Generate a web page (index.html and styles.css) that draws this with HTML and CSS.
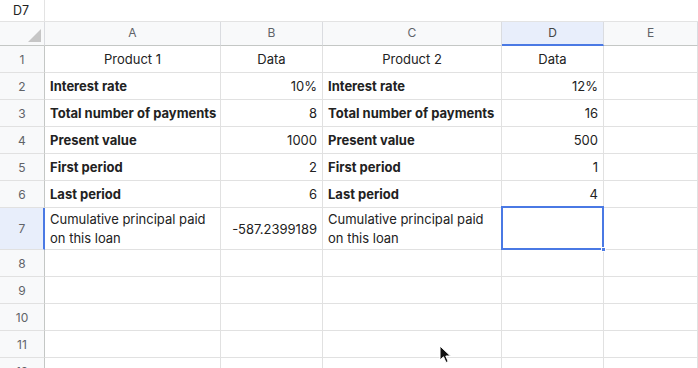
FILE: index.html
```html
<!DOCTYPE html>
<html lang="en">
<head>
    <meta charset="UTF-8">
    <title>Sheet</title>
    <link rel="stylesheet" href="styles.css">
</head>
<body>
    <div class="namebar">
        <div class="namebox">D7</div>
        <div class="formula"></div>
    </div>
    <div class="sheet">
        <div class="corner"><span class="tri"></span></div>
        <div class="colhead">A</div>
        <div class="colhead">B</div>
        <div class="colhead">C</div>
        <div class="colhead active">D</div>
        <div class="colhead">E</div>

        <div class="rowhead">1</div>
        <div class="cell center">Product 1</div>
        <div class="cell center">Data</div>
        <div class="cell center">Product 2</div>
        <div class="cell center">Data</div>
        <div class="cell"></div>

        <div class="rowhead">2</div>
        <div class="cell bold">Interest rate</div>
        <div class="cell num">10%</div>
        <div class="cell bold">Interest rate</div>
        <div class="cell num">12%</div>
        <div class="cell"></div>

        <div class="rowhead">3</div>
        <div class="cell bold">Total number of payments</div>
        <div class="cell num">8</div>
        <div class="cell bold">Total number of payments</div>
        <div class="cell num">16</div>
        <div class="cell"></div>

        <div class="rowhead">4</div>
        <div class="cell bold">Present value</div>
        <div class="cell num">1000</div>
        <div class="cell bold">Present value</div>
        <div class="cell num">500</div>
        <div class="cell"></div>

        <div class="rowhead">5</div>
        <div class="cell bold">First period</div>
        <div class="cell num">2</div>
        <div class="cell bold">First period</div>
        <div class="cell num">1</div>
        <div class="cell"></div>

        <div class="rowhead">6</div>
        <div class="cell bold">Last period</div>
        <div class="cell num">6</div>
        <div class="cell bold">Last period</div>
        <div class="cell num">4</div>
        <div class="cell"></div>

        <div class="rowhead active">7</div>
        <div class="cell wrap">Cumulative principal paid on this loan</div>
        <div class="cell num">-587.2399189</div>
        <div class="cell wrap">Cumulative principal paid on this loan</div>
        <div class="cell selected"><span class="handle"></span></div>
        <div class="cell"></div>

        <div class="rowhead">8</div>
        <div class="cell"></div><div class="cell"></div><div class="cell"></div><div class="cell"></div><div class="cell"></div>
        <div class="rowhead">9</div>
        <div class="cell"></div><div class="cell"></div><div class="cell"></div><div class="cell"></div><div class="cell"></div>
        <div class="rowhead">10</div>
        <div class="cell"></div><div class="cell"></div><div class="cell"></div><div class="cell"></div><div class="cell"></div>
        <div class="rowhead">11</div>
        <div class="cell"></div><div class="cell"></div><div class="cell"></div><div class="cell"></div><div class="cell"></div>
        <div class="rowhead">12</div>
        <div class="cell"></div><div class="cell"></div><div class="cell"></div><div class="cell"></div><div class="cell"></div>
    </div>

    <svg class="pointer" width="14" height="20" viewBox="0 0 14 20">
        <path d="M1 1 L1 15 L4.5 11.8 L7 17.5 L9.2 16.5 L6.8 11 L11.5 11 Z" fill="#111" stroke="#fff" stroke-width="1"/>
    </svg>
</body>
</html>
```

FILE: styles.css
```css
* { box-sizing: border-box; margin: 0; padding: 0; }
body {
    font-family: 'Inter', 'Liberation Sans', sans-serif;
    font-size: 13px;
    color: #222222;
    background-color: #FFFFFF;
    width: 698px;
    height: 368px;
    overflow: hidden;
    position: relative;
}
.namebar {
    display: flex;
    height: 22px;
    border-bottom: 1px solid #e3e3e3;
}
.namebox {
    width: 45px;
    border-right: 1px solid #e3e3e3;
    padding-left: 13px;
    line-height: 21px;
    font-size: 12.5px;
}
.formula { flex: 1; }

.sheet {
    display: grid;
    grid-template-columns: 45px 176px 102px 179px 102px 1fr;
    grid-template-rows: 24px repeat(6, 27px) 42px repeat(5, 27px);
}
.corner, .colhead {
    background-color: #f8f9fa;
    border-right: 1px solid #dadce0;
    border-bottom: 1px solid #c4c7c5;
}
.corner { position: relative; }
.tri {
    position: absolute;
    right: 3px;
    bottom: 3px;
    width: 0;
    height: 0;
    border-left: 13px solid transparent;
    border-bottom: 13px solid #c6c6c6;
}
.colhead {
    color: #606368;
    font-size: 12px;
    text-align: center;
    line-height: 22px;
}
.colhead.active {
    background-color: #e8eefb;
    border-bottom: 2px solid #4a79e4;
    color: #444;
}
.rowhead {
    background-color: #f8f9fa;
    border-right: 1px solid #c4c7c5;
    border-bottom: 1px solid #e1e1e1;
    color: #606368;
    font-size: 12px;
    display: flex;
    align-items: center;
    justify-content: center;
}
.rowhead.active {
    background-color: #e8eefb;
    border-right: 2px solid #4a79e4;
    padding-left: 1px;
}
.cell {
    border-right: 1px solid #e1e1e1;
    border-bottom: 1px solid #e1e1e1;
    padding: 0 5px;
    display: flex;
    align-items: center;
    white-space: nowrap;
    overflow: hidden;
}
.cell.center { justify-content: center; }
.cell.num { justify-content: flex-end; }
.cell.bold { font-weight: 700; }
.cell.wrap { white-space: normal; line-height: 19px; }
.cell.selected {
    position: relative;
    overflow: visible;
}
.cell.selected::after {
    content: '';
    position: absolute;
    left: -1px;
    top: -2px;
    right: -1px;
    bottom: -1px;
    border: 2px solid #4a79e4;
}
.handle {
    position: absolute;
    right: -3px;
    bottom: -3px;
    width: 5px;
    height: 5px;
    background-color: #4a79e4;
    border: 1px solid #fff;
    z-index: 2;
}
.pointer {
    position: absolute;
    left: 439px;
    top: 345px;
}
```
